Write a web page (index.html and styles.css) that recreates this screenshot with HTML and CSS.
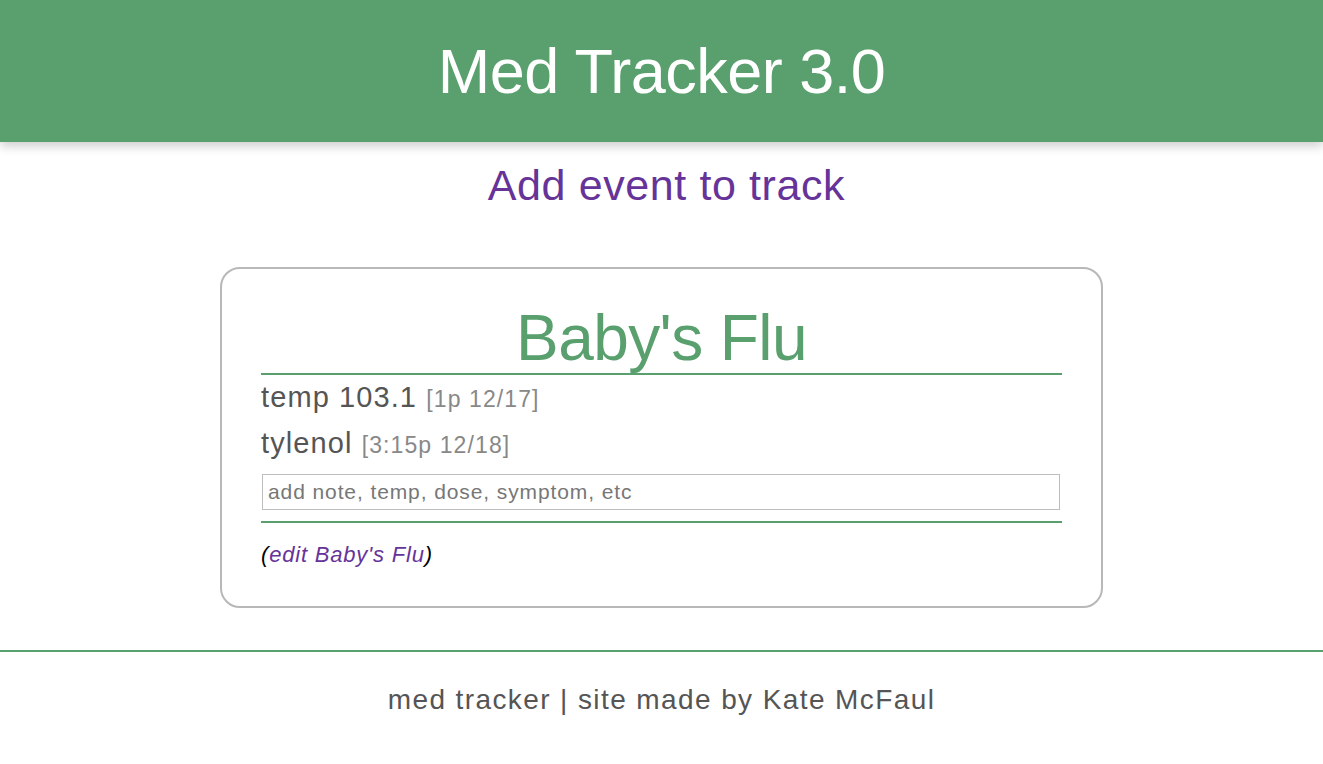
FILE: index.html
```html
<!DOCTYPE html>
<html>
<head>
<meta charset="utf-8">
<link rel="stylesheet" href="styles.css">
</head>
<body>
<header class="site-header">
  <h1 class="site-title">Med Tracker 3.0</h1>
</header>
<main class="main">
  <a class="add-link" href="#">Add event to track</a>
  <section class="card">
    <h2 class="card-title">Baby's Flu</h2>
    <ul class="entries">
      <li class="entry">temp 103.1 <span class="stamp">[1p 12/17]</span></li>
      <li class="entry">tylenol <span class="stamp">[3:15p 12/18]</span></li>
    </ul>
    <form class="note-form">
      <input class="note-input" type="text" placeholder="add note, temp, dose, symptom, etc">
    </form>
    <p class="edit">(<a class="edit-link" href="#">edit Baby's Flu</a>)</p>
  </section>
</main>
<footer class="site-footer">
  <p class="footer-text">med tracker | site made by Kate McFaul</p>
</footer>
</body>
</html>
```
FILE: styles.css
```css
* { box-sizing: border-box; }
body {
  margin: 0;
  font-family: "Liberation Sans", Arial, sans-serif;
  color: #555;
  background: #fff;
}
.site-header {
  background: #5aa06e;
  height: 142px;
  display: flex;
  align-items: center;
  justify-content: center;
  box-shadow: 0 4px 10px rgba(0,0,0,0.2);
}
.site-title {
  margin: 0;
  color: #fff;
  font-weight: normal;
  font-size: 63px;
  letter-spacing: -0.5px;
}
.main {
  display: flex;
  flex-direction: column;
  align-items: center;
}
.add-link {
  margin-top: 17px;
  padding-left: 10px;
  color: #663399;
  text-decoration: none;
  font-size: 43px;
  line-height: 52px;
  letter-spacing: 0.6px;
}
.card {
  margin-top: 56px;
  width: 883px;
  border: 2px solid #b8b8b8;
  border-radius: 20px;
  padding: 34px 39px 37px;
}
.card-title {
  margin: 0;
  text-align: center;
  color: #5aa06e;
  font-weight: normal;
  font-size: 64px;
  line-height: 70px;
  border-bottom: 2px solid #5aa06e;
  letter-spacing: -0.6px;
}
.entries {
  list-style: none;
  margin: 0;
  padding: 0;
}
.entry {
  font-size: 29px;
  line-height: 44px;
  color: #555;
  letter-spacing: 1.1px;
}
.entry:first-child { padding-top: 1px; line-height: 43px; }
.stamp {
  font-size: 23px;
  color: #888;
  letter-spacing: 1.1px;
}
.note-form {
  margin-top: 7px;
  padding-bottom: 11px;
  border-bottom: 2px solid #5aa06e;
}
.note-input {
  display: block;
  width: 798px;
  margin-left: 1px;
  height: 36px;
  border: 1px solid #bdbdbd;
  padding: 0 5px;
  font-family: "Liberation Sans", Arial, sans-serif;
  font-size: 21px;
  letter-spacing: 0.9px;
  color: #555;
}
.note-input::placeholder { color: #777; }
.edit {
  margin: 18px 0 0;
  font-size: 22px;
  font-style: italic;
  color: #000;
  line-height: 28px;
  letter-spacing: 0.8px;
}
.edit-link {
  color: #663399;
  text-decoration: none;
}
.site-footer {
  margin-top: 42px;
  border-top: 2px solid #5aa06e;
  text-align: center;
}
.footer-text {
  margin: 32px 0 0;
  font-size: 28px;
  color: #555;
  letter-spacing: 1.4px;
}
```
